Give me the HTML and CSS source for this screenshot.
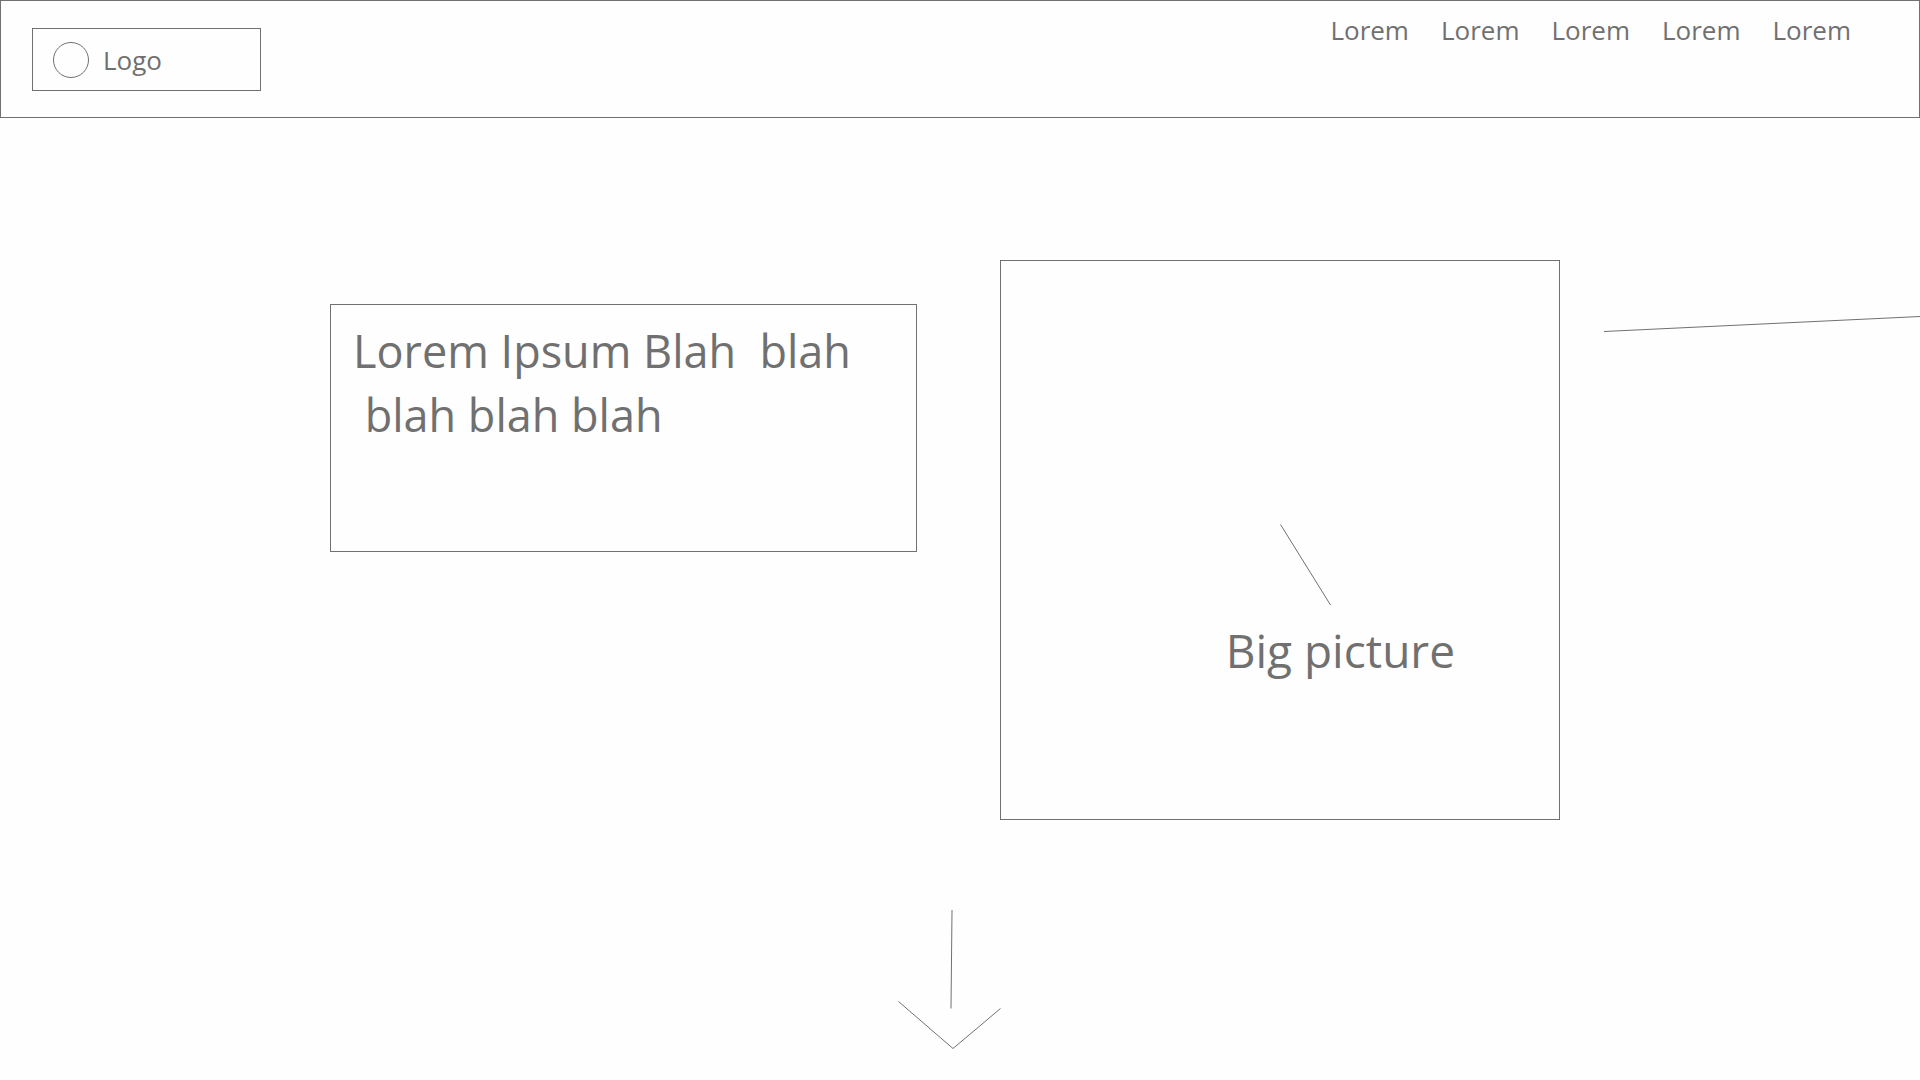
FILE: index.html
```html
<!DOCTYPE html>
<html lang="en">
<head>
  <meta charset="utf-8">
  <meta name="viewport" content="width=device-width, initial-scale=1">
  <title>Logo</title>
  <link rel="stylesheet" href="styles.css">
</head>
<body>
  <header class="header">
    <a class="logo" href="#">
      <span class="logo-mark"></span>
      <span class="logo-text">Logo</span>
    </a>
    <nav class="nav">
      <a class="nav-link" href="#">Lorem</a>
      <a class="nav-link" href="#">Lorem</a>
      <a class="nav-link" href="#">Lorem</a>
      <a class="nav-link" href="#">Lorem</a>
      <a class="nav-link" href="#">Lorem</a>
    </nav>
  </header>
  <main>
    <section class="hero">
      <h1 class="headline">Lorem Ipsum Blah&nbsp; blah
&nbsp;blah blah blah</h1>
      <figure class="picture">
        <svg class="pointer" width="52" height="82" viewBox="0 0 52 82" aria-hidden="true">
          <path d="M.5 .5 50.5 81"/>
        </svg>
        <figcaption class="caption">Big picture</figcaption>
      </figure>
      <svg class="side-line" height="17" viewBox="0 0 316 17" preserveAspectRatio="none" aria-hidden="true">
        <path d="M0 15.5 316 .5"/>
      </svg>
    </section>
    <div class="scroll">
      <a href="#" aria-label="Scroll down">
        <svg width="104" height="140" viewBox="0 0 104 140" aria-hidden="true">
          <path d="M54 0 53 98.500M.5 91.500 55 138.500 102.500 98.500"/>
        </svg>
      </a>
    </div>
  </main>
</body>
</html>
```
FILE: styles.css
```css
* {
  box-sizing: border-box;
}

body {
  margin: 0;
  background: #fefefe;
  color: #707070;
  font-family: "Segoe UI", "Open Sans", "Noto Sans", sans-serif;
}

a {
  color: inherit;
  text-decoration: none;
}

svg {
  display: block;
  fill: none;
  stroke: #707070;
  stroke-width: 1;
}

.header {
  display: flex;
  justify-content: space-between;
  align-items: flex-start;
  min-height: 118px;
  padding: 0 68px 0 31px;
  border: 1px solid #707070;
}

.logo {
  display: flex;
  align-items: center;
  gap: 14px;
  width: 229px;
  height: 63px;
  margin-top: 27px;
  padding-left: 20px;
  border: 1px solid #707070;
}

.logo-mark {
  width: 36px;
  height: 36px;
  border: 1px solid #707070;
  border-radius: 50%;
}

.logo-text,
.nav-link {
  font-size: 26px;
  line-height: 36px;
}

.nav {
  display: flex;
  gap: 32px;
  padding-top: 11px;
}

/* headline, gutter, picture, gutter, side line */
.hero {
  display: grid;
  grid-template-columns:
    minmax(0, 587fr) minmax(0, 83fr) minmax(0, 560fr)
    minmax(0, 44fr) minmax(0, 316fr);
  align-items: start;
  padding: 142px 0 0 17.1875%;
}

.headline {
  min-height: 248px;
  margin: 44px 0 0;
  padding: 14px 22px;
  border: 1px solid #707070;
  font-size: 45px;
  font-weight: 400;
  line-height: 64px;
  white-space: pre-wrap;
}

.picture {
  grid-column: 3;
  aspect-ratio: 1;
  margin: 0;
  padding-top: 263px;
  border: 1px solid #707070;
}

.pointer {
  margin-left: 50%;
}

.caption {
  margin-top: 12px;
  padding-right: 104px;
  font-size: 46px;
  line-height: 64px;
  text-align: right;
}

.side-line {
  grid-column: 5;
  width: 100%;
  margin-top: 56px;
}

.scroll {
  display: flex;
  justify-content: center;
  padding: 90px 20px 0 0;
}
```
